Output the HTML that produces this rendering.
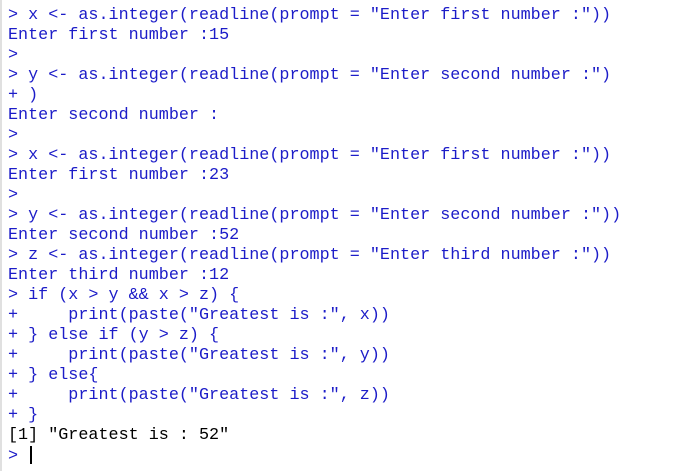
<!DOCTYPE html>
<html><head><style>
html,body{margin:0;padding:0;background:#fff;width:675px;height:471px;overflow:hidden}
.b{position:absolute;left:0;top:0;width:2px;height:471px;background:#e0e0e0}
pre{position:absolute;left:8px;top:6px;margin:0;font-family:"Liberation Mono",monospace;font-size:16.75px;line-height:20px;color:#1c1cc8;letter-spacing:0}
.k{color:#000}
.c{display:inline-block;width:2px;height:18px;background:#000;vertical-align:-4px;margin-left:2px}
</style></head><body><div class="b"></div>
<pre>&gt; x &lt;- as.integer(readline(prompt = "Enter first number :"))
Enter first number :15
&gt; 
&gt; y &lt;- as.integer(readline(prompt = "Enter second number :")
+ )
Enter second number :
&gt; 
&gt; x &lt;- as.integer(readline(prompt = "Enter first number :"))
Enter first number :23
&gt; 
&gt; y &lt;- as.integer(readline(prompt = "Enter second number :"))
Enter second number :52
&gt; z &lt;- as.integer(readline(prompt = "Enter third number :"))
Enter third number :12
&gt; if (x &gt; y &amp;&amp; x &gt; z) {
+     print(paste("Greatest is :", x))
+ } else if (y &gt; z) {
+     print(paste("Greatest is :", y))
+ } else{
+     print(paste("Greatest is :", z))
+ }
<span class="k">[1] "Greatest is : 52"</span>
&gt; <span class="c"></span></pre>
</body></html>
